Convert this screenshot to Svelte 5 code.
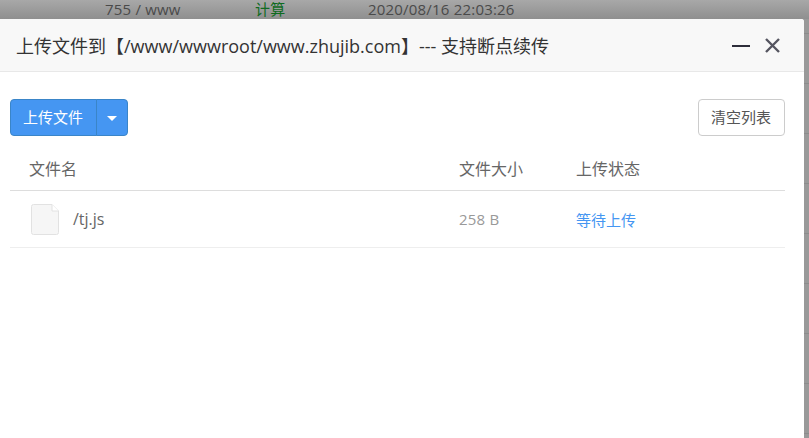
<script>
  const files = [{ name: '/tj.js', size: '258 B', status: '等待上传' }];
</script>

<div class="page">
  <div class="behind">
    <span class="perm">755 / www</span>
    <span class="tag">计算</span>
    <span class="date">2020/08/16 22:03:26</span>
  </div>

  <div class="body-row">
    <section class="dialog">
      <header class="title-bar">
        <h1>上传文件到【/www/wwwroot/www.zhujib.com】--- 支持断点续传</h1>
        <div class="win-actions">
          <span class="min"></span>
          <svg class="close" width="15" height="15" viewBox="0 0 15 15" aria-hidden="true">
            <path d="M1 1 14 14M14 1 1 14" fill="none" stroke="#555560" stroke-width="2.4" />
          </svg>
        </div>
      </header>

      <div class="content">
        <div class="toolbar">
          <div class="split">
            <button class="upload" type="button">上传文件</button>
            <button class="caret-btn" type="button" aria-label="更多"><span class="caret"></span></button>
          </div>
          <button class="clear" type="button">清空列表</button>
        </div>

        <div class="row head">
          <div class="col-name">文件名</div>
          <div class="col-size">文件大小</div>
          <div class="col-status">上传状态</div>
        </div>

        {#each files as file}
          <div class="row item">
            <div class="col-name file">
              <svg width="28" height="31" viewBox="0 0 28 31" aria-hidden="true">
                <path d="M2.500.5H21L27.500 7V28.500a2 2 0 0 1-2 2H2.500a2 2 0 0 1-2-2V2.500a2 2 0 0 1 2-2Z" fill="#f6f6f6" stroke="#e2e2e2" />
                <path d="M21 .5V7H27.500" fill="#fff" stroke="#e2e2e2" />
              </svg>
              <span>{file.name}</span>
            </div>
            <div class="col-size size">{file.size}</div>
            <div class="col-status status">{file.status}</div>
          </div>
        {/each}
      </div>
    </section>
  </div>
</div>

<style>
  :global(body) {
    margin: 0;
    background: #999;
    font-family: "Open Sans", "Noto Sans CJK SC", sans-serif;
  }

  .page {
    width: 809px;
    height: 438px;
    overflow: hidden;
    display: flex;
    flex-direction: column;
    /* table rows of the page behind the mask */
    background: repeating-linear-gradient(#999 0 33px, #8c8c8c 33px 34px, #999 34px 50px);
  }

  .behind {
    height: 19px;
    flex: none;
    display: flex;
    align-items: center;
    padding-bottom: 2px;
    box-sizing: border-box;
    font-size: 15px;
    letter-spacing: 0.2px;
    color: #4a4a4a;
    background: linear-gradient(#a8a8a8, #8f8f8f);
  }

  .perm {
    margin-left: 105px;
    width: 150px;
  }

  .tag {
    width: 113px;
    color: #0f6b1f;
  }

  .body-row {
    flex: 1;
    display: flex;
  }

  .dialog {
    width: 804px;
    background: #fff;
    border-top-right-radius: 3px;
    display: flex;
    flex-direction: column;
  }

  .title-bar {
    height: 53px;
    box-sizing: border-box;
    border-bottom: 1px solid #e8e8e8;
    background: #f8f8f8;
    border-top-right-radius: 3px;
    display: flex;
    align-items: center;
    justify-content: space-between;
    padding: 0 24px 0 16px;
  }

  h1 {
    margin: 0;
    font-size: 18px;
    font-weight: 400;
    color: #333;
  }

  .win-actions {
    display: flex;
    align-items: center;
    gap: 15px;
  }

  .min {
    width: 18px;
    height: 2px;
    background: #2d2d3a;
    margin-top: 2px;
  }

  .close {
    display: block;
  }

  .content {
    padding: 27px 19px 0 10px;
  }

  .toolbar {
    display: flex;
    justify-content: space-between;
    align-items: flex-start;
  }

  .split {
    display: flex;
  }

  button {
    font: inherit;
    cursor: pointer;
  }

  .upload,
  .caret-btn {
    height: 37px;
    background: #4596f2;
    border: 1px solid #3a85c8;
    color: #fff;
    font-size: 15px;
  }

  .upload {
    width: 87px;
    padding: 0 1px 2px 0;
    border-radius: 4px 0 0 4px;
  }

  .caret-btn {
    width: 32px;
    margin-left: -1px;
    padding: 0;
    border-radius: 0 4px 4px 0;
    display: flex;
    align-items: center;
    justify-content: center;
  }

  .caret {
    width: 0;
    height: 0;
    border-left: 5px solid transparent;
    border-right: 5px solid transparent;
    border-top: 5px solid #fff;
    margin-top: 2px;
  }

  .clear {
    width: 87px;
    height: 37px;
    padding: 0 1px 2px 0;
    background: #fff;
    border: 1px solid #ccc;
    border-radius: 4px;
    color: #555;
    font-size: 15px;
  }

  .row {
    display: grid;
    grid-template-columns: 449px 117px 1fr;
    align-items: center;
    font-size: 16px;
  }

  .head {
    height: 55px;
    padding-top: 9px;
    border-bottom: 1px solid #ddd;
    color: #666;
    box-sizing: border-box;
  }

  .head .col-name {
    padding-left: 19px;
  }

  .item {
    height: 57px;
    box-sizing: border-box;
    border-bottom: 1px solid #eee;
  }

  .file {
    display: flex;
    align-items: center;
    gap: 14px;
    padding-left: 21px;
    color: #666;
  }

  .file svg {
    display: block;
  }

  .size {
    color: #999;
    font-size: 15px;
    letter-spacing: 0.2px;
  }

  .status {
    color: #4596f2;
    font-size: 15px;
  }
</style>
